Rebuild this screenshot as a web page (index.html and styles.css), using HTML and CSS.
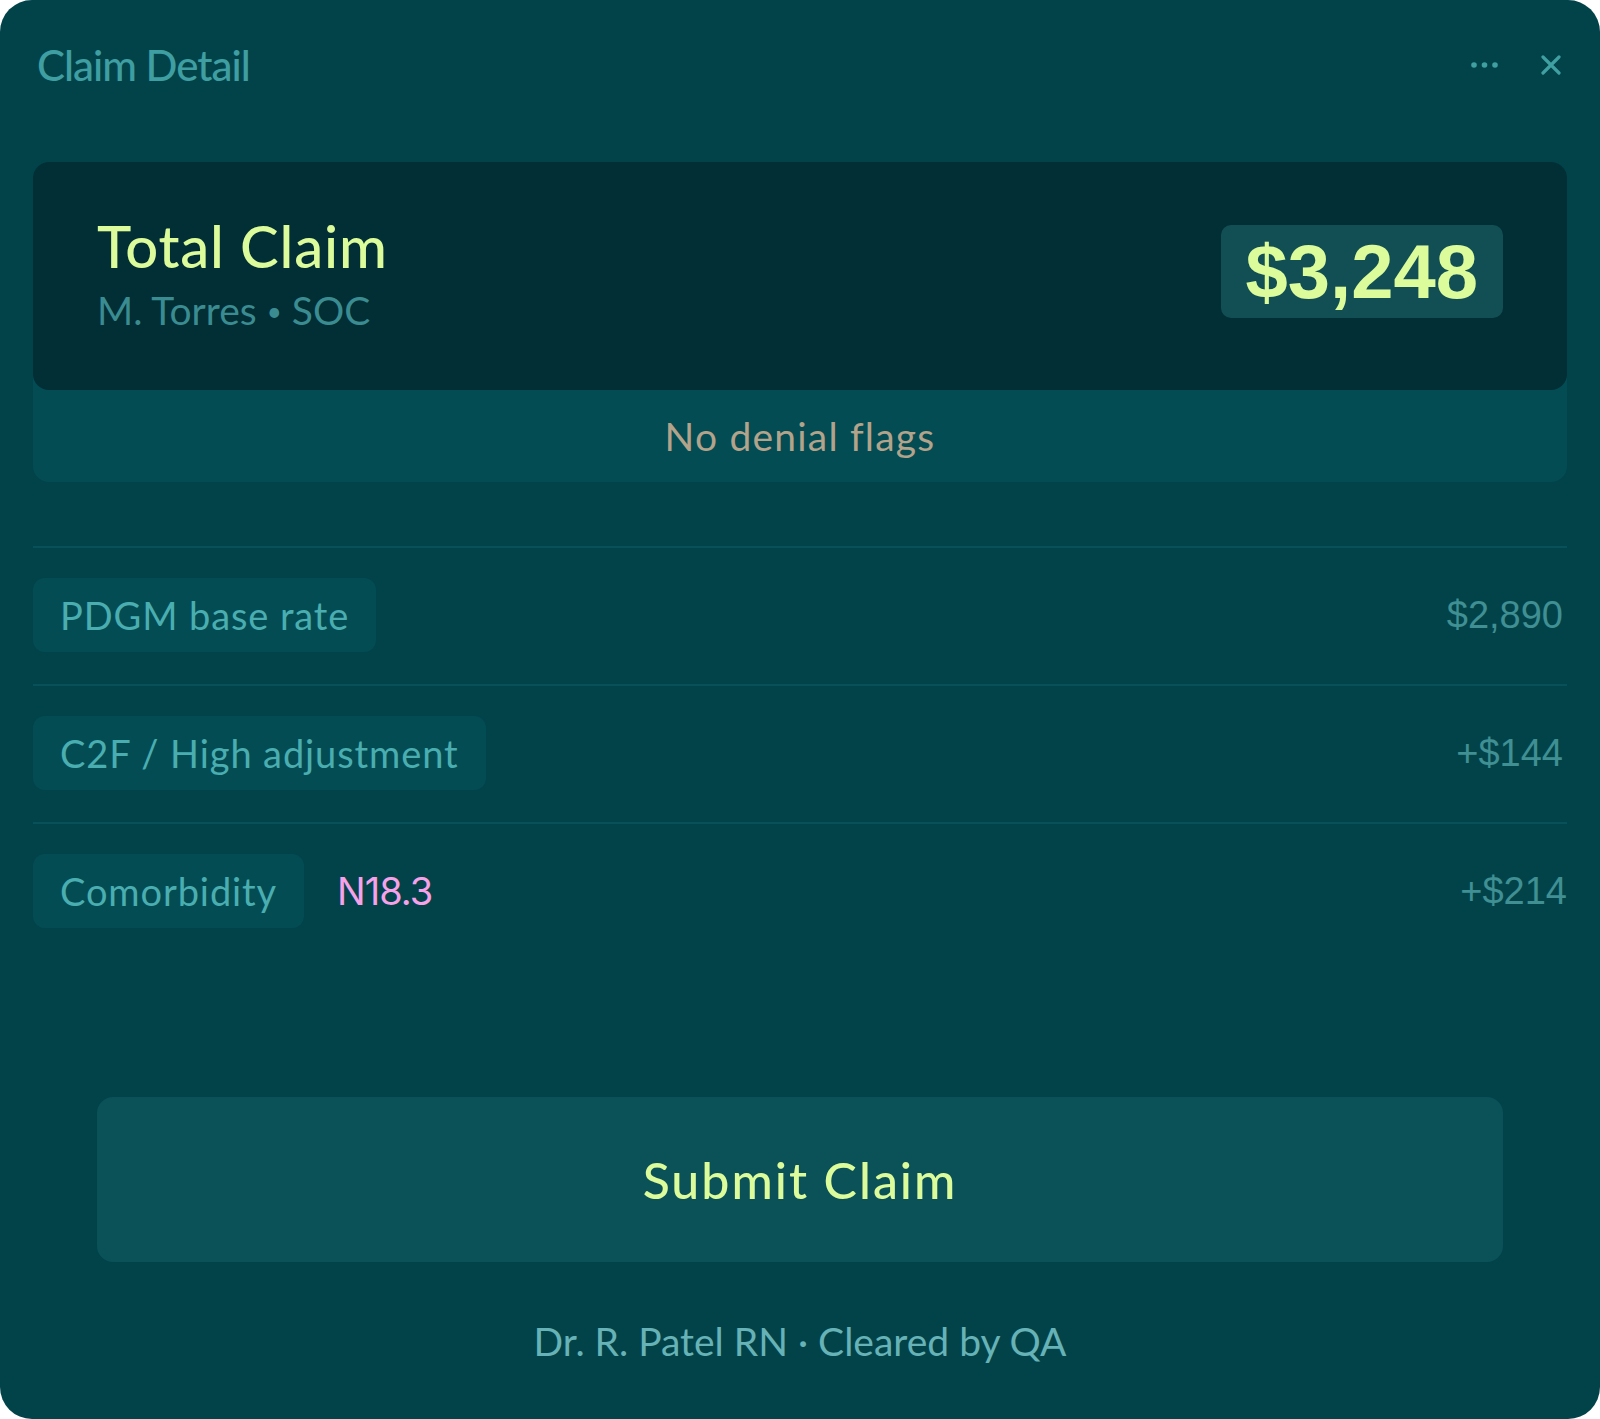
FILE: index.html
```html
<!DOCTYPE html>
<html lang="en">
<head>
    <meta charset="UTF-8">
    <meta name="viewport" content="width=device-width, initial-scale=1.0">
    <title>Claim Detail</title>
    <link rel="stylesheet" href="styles.css">
</head>
<body>
    <div class="panel">
        <div class="header">
            <h1 class="title">Claim Detail</h1>
            <div class="header-actions">
                <svg class="icon-more" width="28" height="8" viewBox="0 0 28 8">
                    <circle cx="3" cy="4" r="2.8"/>
                    <circle cx="13.5" cy="4" r="2.8"/>
                    <circle cx="24" cy="4" r="2.8"/>
                </svg>
                <svg class="icon-close" width="20" height="20" viewBox="0 0 20 20">
                    <path d="M2 2 L18 18 M18 2 L2 18"/>
                </svg>
            </div>
        </div>

        <div class="summary">
            <div class="summary-main">
                <div class="summary-text">
                    <div class="summary-title">Total Claim</div>
                    <div class="summary-sub">M. Torres <span class="dot">•</span> SOC</div>
                </div>
                <div class="total-badge">$3,248</div>
            </div>
            <div class="summary-flags">No denial flags</div>
        </div>

        <div class="line-items">
            <div class="line-item">
                <span class="chip">PDGM base rate</span>
                <span class="amount">$2,890</span>
            </div>
            <div class="line-item">
                <span class="chip">C2F / High adjustment</span>
                <span class="amount">+$144</span>
            </div>
            <div class="line-item">
                <span class="chip">Comorbidity</span>
                <span class="code">N18.3</span>
                <span class="amount amount-wide">+$214</span>
            </div>
        </div>

        <button class="submit-btn">Submit Claim</button>

        <div class="footer">Dr. R. Patel RN · Cleared by QA</div>
    </div>
</body>
</html>
```

FILE: styles.css
```css
:root {
    --panel-bg: #02434a;
    --hero-bg: #022e35;
    --strip-bg: #034c54;
    --teal: #3e9ea1;
    --lime: #dcfb9b;
}

* {
    box-sizing: border-box;
}

body {
    margin: 0;
    background: #ffffff;
    font-family: Lato, "Noto Sans", sans-serif;
}

.panel {
    width: 1600px;
    height: 1419px;
    background: var(--panel-bg);
    border-radius: 32px;
    padding: 0 33px;
    display: flex;
    flex-direction: column;
}

.header {
    height: 130px;
    display: flex;
    align-items: center;
    justify-content: space-between;
    padding: 0 6px 0 4px;
    margin-bottom: 32px;
}

.title {
    margin: 0;
    font-size: 42px;
    font-weight: 500;
    color: var(--teal);
    letter-spacing: -1px;
}

.header-actions {
    display: flex;
    align-items: center;
    gap: 42px;
}

.icon-more circle {
    fill: #3f9fa1;
}

.icon-close path {
    stroke: #3f9fa1;
    stroke-width: 3.2;
    stroke-linecap: round;
    fill: none;
}

.summary {
    background: var(--strip-bg);
    border-radius: 16px;
}

.summary-main {
    height: 228px;
    background: var(--hero-bg);
    border-radius: 16px;
    padding: 0 64px;
    display: flex;
    align-items: center;
    justify-content: space-between;
}

.summary-text {
    padding-bottom: 8px;
}

.summary-title {
    font-size: 58px;
    font-weight: 500;
    color: var(--lime);
    line-height: 68px;
    letter-spacing: 0.8px;
    margin-bottom: 8px;
}

.summary-sub {
    font-size: 39px;
    color: #3a8c91;
    line-height: 44px;
}

.summary-sub .dot {
    font-size: 26px;
    vertical-align: 4px;
}

.total-badge {
    background: #114f55;
    border-radius: 10px;
    height: 93px;
    margin-bottom: 9px;
    padding: 0 25px;
    display: flex;
    align-items: center;
    font-family: "Liberation Sans", Arial, sans-serif;
    font-weight: 700;
    font-size: 76px;
    color: var(--lime);
}

.summary-flags {
    height: 92px;
    display: flex;
    align-items: center;
    justify-content: center;
    font-size: 39px;
    letter-spacing: 1.2px;
    color: #b2a38a;
}

.line-items {
    margin-top: 64px;
}

.line-item {
    border-top: 2px solid #08505a;
    padding: 30px 0 32px;
    display: flex;
    align-items: center;
}

.chip {
    height: 74px;
    padding: 0 27px;
    background: #044c54;
    border-radius: 12px;
    display: flex;
    align-items: center;
    font-size: 38px;
    letter-spacing: 0.9px;
    color: #4aaeb0;
}

.code {
    margin-left: 33px;
    font-family: Inter, sans-serif;
    font-size: 38px;
    letter-spacing: -1px;
    color: #f7a1e8;
}

.amount {
    margin-left: auto;
    margin-right: 4px;
    font-family: "Liberation Sans", Arial, sans-serif;
    font-size: 38px;
    color: #3f8f93;
}

.amount-wide {
    margin-right: 0;
}

.submit-btn {
    margin: 137px 64px 0;
    height: 165px;
    border: none;
    border-radius: 16px;
    background: #0b5158;
    font-family: Lato, "Noto Sans", sans-serif;
    font-size: 50px;
    font-weight: 500;
    letter-spacing: 2px;
    color: var(--lime);
    cursor: pointer;
}

.footer {
    margin-top: 56px;
    text-align: center;
    font-size: 39px;
    color: #67b2b6;
}
```
